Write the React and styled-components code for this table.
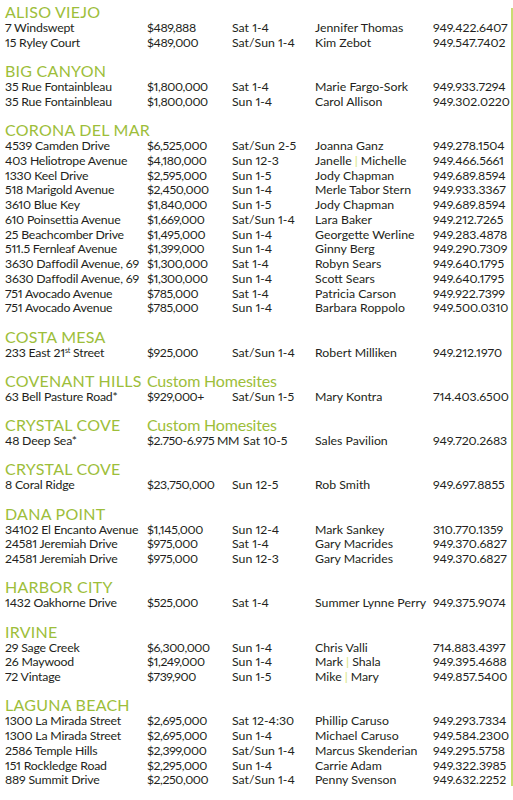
import React from "react";
import styled, { createGlobalStyle } from "styled-components";

const Global = createGlobalStyle`
  html, body { margin: 0; padding: 0; background: #fff; }
  body { font-family: Lato, "Open Sans", sans-serif; color: #231f20; }
`;

const GREEN = "#9dbe3a";

const Page = styled.div`
  width: 513px;
  height: 800px;
  box-sizing: border-box;
  padding: 2px 0 0 5px;
  position: relative;
  overflow: hidden;
`;

const RightRule = styled.div`
  position: absolute;
  right: 0;
  top: 8px;
  bottom: 14px;
  width: 2px;
  background: #c9dc72;
`;

const List = styled.div`
  display: flex;
  flex-direction: column;
  gap: 10.5px;
`;

const Section = styled.section`
  display: flex;
  flex-direction: column;
`;

const HeadRow = styled.div`
  display: flex;
  height: 19px;
  align-items: center;
`;

const Heading = styled.h2`
  margin: 0;
  font-size: 16px;
  font-weight: 400;
  letter-spacing: ${(p) => (p.$first ? "0.25px" : "-0.2px")};
  color: ${GREEN};
  line-height: 19px;
  white-space: nowrap;
  min-width: ${(p) => (p.$first ? "142px" : "auto")};
`;

const Row = styled.div`
  display: flex;
  height: 14.75px;
  line-height: 14.75px;
  font-size: 12.3px;
  white-space: nowrap;
  font-variant-numeric: proportional-nums;
`;

const Cell = styled.div`
  flex: 0 0 auto;
  box-sizing: border-box;
  min-width: ${(p) => p.$w}px;
  padding-right: ${(p) => p.$pad || 0}px;
  letter-spacing: ${(p) => p.$ls || 0}px;
`;

const Terms = styled.div`
  flex: 0 0 168px;
  display: flex;
`;

const Sup = styled.sup`
  font-size: 7px;
  line-height: 0;
  vertical-align: 4px;
`;

const Bar = styled.span`
  color: #d8e47a;
  margin: 0 3px;
`;

const data = [
  {
    h: "ALISO VIEJO",
    rows: [
      ["7 Windswept", "$489,888", "Sat 1-4", "Jennifer Thomas", "949.422.6407"],
      ["15 Ryley Court", "$489,000", "Sat/Sun 1-4", "Kim Zebot", "949.547.7402"],
    ],
  },
  {
    h: "BIG CANYON",
    rows: [
      ["35 Rue Fontainbleau", "$1,800,000", "Sat 1-4", "Marie Fargo-Sork", "949.933.7294"],
      ["35 Rue Fontainbleau", "$1,800,000", "Sun 1-4", "Carol Allison", "949.302.0220"],
    ],
  },
  {
    h: "CORONA DEL MAR",
    rows: [
      ["4539 Camden Drive", "$6,525,000", "Sat/Sun 2-5", "Joanna Ganz", "949.278.1504"],
      ["403 Heliotrope Avenue", "$4,180,000", "Sun 12-3", ["Janelle", "Michelle"], "949.466.5661"],
      ["1330 Keel Drive", "$2,595,000", "Sun 1-5", "Jody Chapman", "949.689.8594"],
      ["518 Marigold Avenue", "$2,450,000", "Sun 1-4", "Merle Tabor Stern", "949.933.3367"],
      ["3610 Blue Key", "$1,840,000", "Sun 1-5", "Jody Chapman", "949.689.8594"],
      ["610 Poinsettia Avenue", "$1,669,000", "Sat/Sun 1-4", "Lara Baker", "949.212.7265"],
      ["25 Beachcomber Drive", "$1,495,000", "Sun 1-4", "Georgette Werline", "949.283.4878"],
      ["511.5 Fernleaf Avenue", "$1,399,000", "Sun 1-4", "Ginny Berg", "949.290.7309"],
      ["3630 Daffodil Avenue, 69", "$1,300,000", "Sat 1-4", "Robyn Sears", "949.640.1795"],
      ["3630 Daffodil Avenue, 69", "$1,300,000", "Sun 1-4", "Scott Sears", "949.640.1795"],
      ["751 Avocado Avenue", "$785,000", "Sat 1-4", "Patricia Carson", "949.922.7399"],
      ["751 Avocado Avenue", "$785,000", "Sun 1-4", "Barbara Roppolo", "949.500.0310"],
    ],
  },
  {
    h: "COSTA MESA",
    rows: [["sup", "$925,000", "Sat/Sun 1-4", "Robert Milliken", "949.212.1970"]],
  },
  {
    h: "COVENANT HILLS",
    sub: "Custom Homesites",
    rows: [["63 Bell Pasture Road*", "$929,000+", "Sat/Sun 1-5", "Mary Kontra", "714.403.6500"]],
  },
  {
    h: "CRYSTAL COVE",
    sub: "Custom Homesites",
    rows: [["48 Deep Sea*", "$2.750-6.975 MM", "Sat 10-5", "Sales Pavilion", "949.720.2683"]],
  },
  {
    h: "CRYSTAL COVE",
    rows: [["8 Coral Ridge", "$23,750,000", "Sun 12-5", "Rob Smith", "949.697.8855"]],
  },
  {
    h: "DANA POINT",
    rows: [
      ["34102 El Encanto Avenue", "$1,145,000", "Sun 12-4", "Mark Sankey", "310.770.1359"],
      ["24581 Jeremiah Drive", "$975,000", "Sat 1-4", "Gary Macrides", "949.370.6827"],
      ["24581 Jeremiah Drive", "$975,000", "Sun 12-3", "Gary Macrides", "949.370.6827"],
    ],
  },
  {
    h: "HARBOR CITY",
    rows: [["1432 Oakhorne Drive", "$525,000", "Sat 1-4", "Summer Lynne Perry", "949.375.9074"]],
  },
  {
    h: "IRVINE",
    rows: [
      ["29 Sage Creek", "$6,300,000", "Sun 1-4", "Chris Valli", "714.883.4397"],
      ["26 Maywood", "$1,249,000", "Sun 1-4", ["Mark", "Shala"], "949.395.4688"],
      ["72 Vintage", "$739,900", "Sun 1-5", ["Mike", "Mary"], "949.857.5400"],
    ],
  },
  {
    h: "LAGUNA BEACH",
    rows: [
      ["1300 La Mirada Street", "$2,695,000", "Sat 12-4:30", "Phillip Caruso", "949.293.7334"],
      ["1300 La Mirada Street", "$2,695,000", "Sun 1-4", "Michael Caruso", "949.584.2300"],
      ["2586 Temple Hills", "$2,399,000", "Sat/Sun 1-4", "Marcus Skenderian", "949.295.5758"],
      ["151 Rockledge Road", "$2,295,000", "Sun 1-4", "Carrie Adam", "949.322.3985"],
      ["889 Summit Drive", "$2,250,000", "Sat/Sun 1-4", "Penny Svenson", "949.632.2252"],
    ],
  },
];

function Address({ v }) {
  if (v === "sup")
    return (
      <>
        233 East 21<Sup>st</Sup> Street
      </>
    );
  return v;
}

function Name({ v }) {
  if (Array.isArray(v))
    return (
      <>
        {v[0]}
        <Bar>|</Bar>
        {v[1]}
      </>
    );
  return v;
}

export default function App() {
  return (
    <>
      <Global />
      <Page>
        <List>
          {data.map((s, i) => (
            <Section key={i}>
              <HeadRow>
                <Heading $first>{s.h}</Heading>
                {s.sub && <Heading>{s.sub}</Heading>}
              </HeadRow>
              {s.rows.map((r, j) => (
                <Row key={j}>
                  <Cell $w={142} $ls={-0.2}>
                    <Address v={r[0]} />
                  </Cell>
                  <Terms>
                    <Cell $w={85} $pad={4} $ls={-0.4}>{r[1]}</Cell>
                    <Cell $w={0}>{r[2]}</Cell>
                  </Terms>
                  <Cell $w={118}>
                    <Name v={r[3]} />
                  </Cell>
                  <Cell $w={0} $ls={-0.1}>{r[4]}</Cell>
                </Row>
              ))}
            </Section>
          ))}
        </List>
        <RightRule />
      </Page>
    </>
  );
}
